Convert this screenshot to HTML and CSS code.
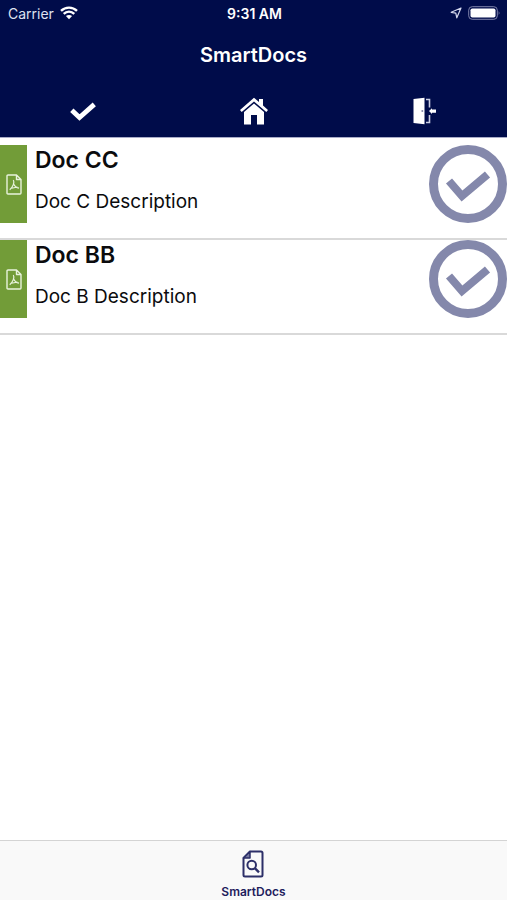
FILE: index.html
```html
<!DOCTYPE html>
<html lang="en">
<head>
<meta charset="utf-8">
<meta name="viewport" content="width=device-width, initial-scale=1">
<title>SmartDocs</title>
<link rel="stylesheet" href="styles.css">
</head>
<body>
<header class="header">
  <div class="status">
    <div class="carrier">
      <span>Carrier</span>
      <svg width="18" height="14" viewBox="0 0 18 14" fill="none" stroke="#fff" stroke-width="2.4" aria-hidden="true">
        <path d="M1 4.9C5.500.5 12.500.5 17 4.900M3.700 7.900C6.800 5 11.200 5 14.300 7.900"/>
        <path fill="#fff" stroke="none" d="M9 13.300 5.900 10.100Q9 7.700 12.100 10.100Z"/>
      </svg>
    </div>
    <div class="time">9:31 AM</div>
    <div class="power">
      <svg width="12" height="12" viewBox="0 0 12 12" fill="none" stroke="#d5d9ee" stroke-width="1.200" stroke-linejoin="round" aria-hidden="true">
        <path d="M11 1 1.200 5.300 5.800 6.200 6.800 10.800Z"/>
      </svg>
      <svg width="33" height="14" viewBox="0 0 33 14" aria-hidden="true">
        <rect x=".7" y=".7" width="28.600" height="12.600" rx="3.500" fill="none" stroke="#7e83aa"/>
        <rect x="2.500" y="2.500" width="25" height="9" rx="1.800" fill="#fff"/>
        <path d="M30.700 5Q32.500 7 30.700 9Z" fill="#7e83aa"/>
      </svg>
    </div>
  </div>
  <h1 class="title">SmartDocs</h1>
  <nav class="tools">
    <button class="tool" type="button" aria-label="Done">
      <svg width="26" height="28" viewBox="0 0 26 28" aria-hidden="true">
        <path d="M1.800 13.200 9.500 20.600 24.300 7.400" fill="none" stroke="#fff" stroke-width="4.800"/>
      </svg>
    </button>
    <button class="tool" type="button" aria-label="Home">
      <svg width="28" height="28" viewBox="0 0 28 28" fill="#fff" aria-hidden="true">
        <path d="M14 .8 19 5.100V2H23V8.600L28 13 26.300 15 14 4.500 1.700 15 0 13Z"/>
        <path d="M14 6.500 24 15V27.500H17V18H11V27.500H4V15Z"/>
      </svg>
    </button>
    <button class="tool" type="button" aria-label="Exit">
      <svg width="26" height="28" viewBox="0 0 26 28" aria-hidden="true">
        <path d="M2.500 2 13.500.8V27.200L2.500 26Z" fill="#fff"/>
        <circle cx="11.300" cy="14" r="1" fill="#8589a8"/>
        <path d="M15 2.500H18.500V10.500M18.500 18V25.500H15" fill="none" stroke="#c9cde2" stroke-width="1.600"/>
        <path d="M18 14 21 11.300V12.500H25V15.700H21V17Z" fill="#fff"/>
      </svg>
    </button>
  </nav>
</header>

<main class="content">
  <ul class="docs">
    <li class="doc">
      <div class="kind">
        <svg width="16" height="21" viewBox="0 0 16 21" fill="none" stroke="#e8f2dc" stroke-width="1.400" stroke-linejoin="round" role="img" aria-label="PDF">
          <path d="M1 2Q1 1 2 1H10.500L15 5.500V19Q15 20 14 20H2Q1 20 1 19ZM10.500 1V5.500H15"/>
          <path stroke-width="1.200" d="M7.300 6C8.800 8 7 13 3.700 15.700M7.500 9.500C8.500 12 10.500 13.700 13 14.200M4.500 14.500 11.500 13"/>
        </svg>
      </div>
      <div class="text">
        <h2 class="name">Doc CC</h2>
        <p class="description">Doc C Description</p>
      </div>
      <svg class="check" viewBox="0 0 78 78" fill="none" stroke="#8488ab" role="img" aria-label="Read">
        <circle cx="39" cy="39" r="34.500" stroke-width="9"/>
        <path d="M20 36 33 51 58.500 29.500" stroke-width="8"/>
      </svg>
    </li>
    <li class="doc">
      <div class="kind">
        <svg width="16" height="21" viewBox="0 0 16 21" fill="none" stroke="#e8f2dc" stroke-width="1.400" stroke-linejoin="round" role="img" aria-label="PDF">
          <path d="M1 2Q1 1 2 1H10.500L15 5.500V19Q15 20 14 20H2Q1 20 1 19ZM10.500 1V5.500H15"/>
          <path stroke-width="1.200" d="M7.300 6C8.800 8 7 13 3.700 15.700M7.500 9.500C8.500 12 10.500 13.700 13 14.200M4.500 14.500 11.500 13"/>
        </svg>
      </div>
      <div class="text">
        <h2 class="name">Doc BB</h2>
        <p class="description">Doc B Description</p>
      </div>
      <svg class="check" viewBox="0 0 78 78" fill="none" stroke="#8488ab" role="img" aria-label="Read">
        <circle cx="39" cy="39" r="34.500" stroke-width="9"/>
        <path d="M20 36 33 51 58.500 29.500" stroke-width="8"/>
      </svg>
    </li>
  </ul>
</main>

<footer class="tabs">
  <a class="tab" href="#">
    <svg width="22" height="28" viewBox="0 0 22 28" fill="none" stroke="#2c2f68" stroke-width="2" stroke-linejoin="round" aria-hidden="true">
      <path d="M8 1.500H19Q20.500 1.500 20.500 3V25Q20.500 26.500 19 26.500H3Q1.500 26.500 1.500 25V8Z"/>
      <path d="M8 1.500V8H1.500Z" stroke-width="1.500" fill="#777a9f"/>
      <circle cx="9.700" cy="15" r="4.300"/>
      <path d="M12.800 18.200 17 22.300" stroke-width="2.400"/>
    </svg>
    <span>SmartDocs</span>
  </a>
</footer>
</body>
</html>
```
FILE: styles.css
```css
* {
  box-sizing: border-box;
}

body {
  display: flex;
  flex-direction: column;
  min-height: 100vh;
  margin: 0;
  background: #fff;
  color: #0b0b0d;
  font-family: Inter, "Liberation Sans", sans-serif;
}

h1, h2, p, ul {
  margin: 0;
  padding: 0;
}

.header {
  background: #000c4a;
  color: #fff;
  border-bottom: 1px solid #a9acc8;
}

.status {
  display: grid;
  grid-template-columns: 1fr auto 1fr;
  align-items: center;
  height: 26px;
  padding: 0 6px 0 8px;
  font-size: 14px;
}

.carrier,
.power {
  display: flex;
  align-items: center;
  gap: 6px;
}

.carrier {
  color: #dfe2f0;
}

.power {
  justify-content: flex-end;
}

.time {
  font-weight: 600;
}

.title {
  padding: 14px 0 13px;
  font-size: 20px;
  line-height: 30px;
  font-weight: 600;
  text-align: center;
}

.tools {
  display: flex;
  justify-content: space-between;
  padding: 14px 70px 12px;
}

.tool {
  display: flex;
  padding: 0;
  border: 0;
  background: none;
}

.content {
  flex: 1;
  padding-top: 7px;
}

.docs {
  list-style: none;
}

.doc {
  display: flex;
  align-items: flex-start;
  gap: 8px;
  padding-bottom: 15px;
  border-bottom: 2px solid #d9d9d9;
}

.kind {
  display: flex;
  align-items: center;
  justify-content: center;
  width: 27px;
  height: 78px;
  background: #729c38;
}

.text {
  flex: 1;
}

.name {
  font-size: 23px;
  line-height: 30px;
  font-weight: 600;
}

.description {
  padding-top: 12px;
  font-size: 19px;
  line-height: 30px;
}

.check {
  width: 78px;
  height: 78px;
}

.tabs {
  display: flex;
  justify-content: center;
  height: 60px;
  padding-top: 9px;
  border-top: 1px solid #d4d4d4;
  background: #f9f9f9;
}

.tab {
  display: flex;
  flex-direction: column;
  align-items: center;
  gap: 6px;
  color: #1d205c;
  font-size: 12px;
  line-height: 16px;
  font-weight: 600;
  text-decoration: none;
}
```
